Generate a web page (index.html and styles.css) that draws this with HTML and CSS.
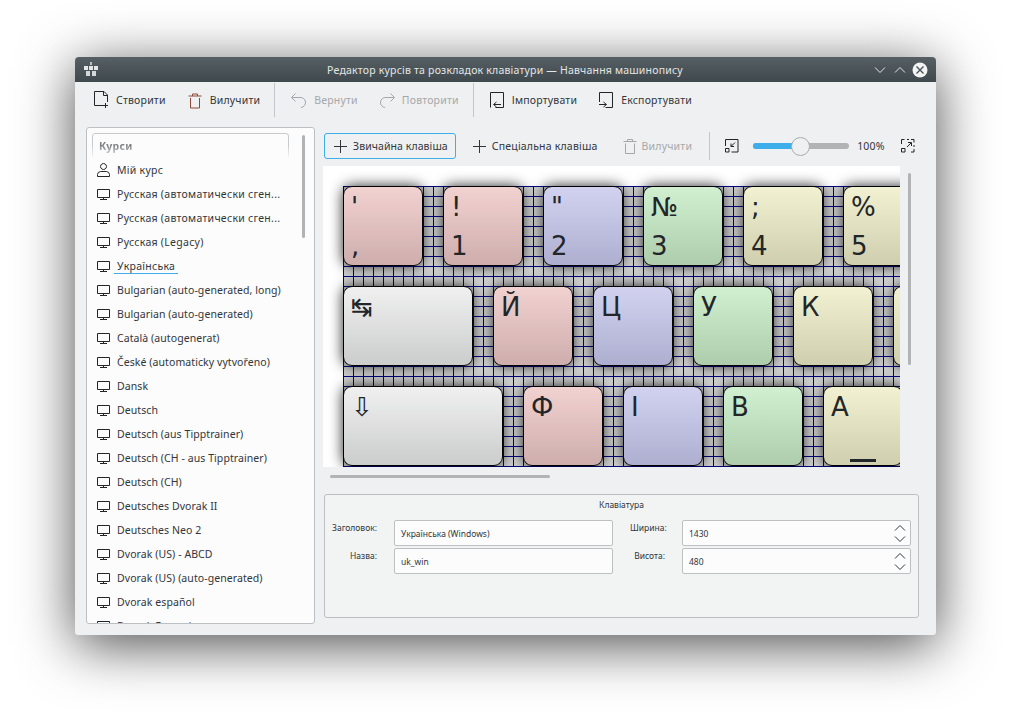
FILE: index.html
```html
<!DOCTYPE html>
<html lang="uk">
<head>
    <meta charset="UTF-8" />
    <title>Редактор курсів та розкладок клавіатури — Навчання машинопису</title>
    <link rel="stylesheet" href="styles.css">
</head>
<body>
    <svg class="sprites" width="0" height="0">
        <symbol id="i-screen" viewBox="0 0 16 16">
            <path d="M2.5 3.5h12v8h-12z M8.5 11.5v2 M5 13.5h7" fill="none" stroke="currentColor" />
        </symbol>
        <symbol id="i-plus" viewBox="0 0 16 16">
            <path d="M8.5 2v13 M2 8.5h13" fill="none" stroke="currentColor" />
        </symbol>
        <symbol id="i-trash" viewBox="0 0 16 16">
            <path d="M1.5 3.500h13 M5.500 3.500v-2h5v2 M3.500 5.500v10h9v-10" fill="none" stroke="currentColor" />
        </symbol>
        <symbol id="i-up" viewBox="0 0 12 8">
            <path d="M1 6.500l5-5 5 5" fill="none" stroke="currentColor" />
        </symbol>
        <symbol id="i-down" viewBox="0 0 12 8">
            <path d="M1 1.500l5 5 5-5" fill="none" stroke="currentColor" />
        </symbol>
    </svg>

    <div class="window">
        <div class="titlebar">
            <svg class="app-icon" width="14" height="16" viewBox="0 0 14 16">
                <path d="M6 0h2v3h-2z" fill="#b9bfc2" />
                <path d="M0 4h4v4h-4z M5 4h4v4h-4z M10 4h4v4h-4z" fill="#e4e7e8" />
                <path d="M2 9h4v5h-4z M8 9h4v5h-4z" fill="#d3d7d9" />
            </svg>
            <span class="title">Редактор курсів та розкладок клавіатури — Навчання машинопису</span>
            <div class="win-buttons">
                <svg class="win-btn" width="12" height="8"><use href="#i-down" /></svg>
                <svg class="win-btn" width="12" height="8"><use href="#i-up" /></svg>
                <svg class="win-close" width="16" height="16" viewBox="0 0 16 16">
                    <circle cx="8" cy="8" r="7.500" fill="#f2f3f3" />
                    <path d="M4.500 4.500l7 7 M11.500 4.500l-7 7" stroke="#4a5357" stroke-width="1.400" />
                </svg>
            </div>
        </div>

        <div class="toolbar">
            <div class="tool">
                <svg width="16" height="18" viewBox="0 0 16 18"><path d="M10.500 14.500h-9v-14h9.500l3.500 3.500v7 M10.500 .5v4h4 M12.500 12v5 M10 14.500h5" fill="none" stroke="#232629" /></svg>
                Створити
            </div>
            <div class="tool">
                <svg class="trash-red" width="16" height="17"><use href="#i-trash" /></svg>
                Вилучити
            </div>
            <div class="sep"></div>
            <div class="tool disabled">
                <svg width="16" height="16" viewBox="0 0 16 16"><path d="M1 5.500h8a5 5 0 0 1 1 10 M4.500 1.500l-4 4 4 4" fill="none" stroke="#a5a8aa" /></svg>
                Вернути
            </div>
            <div class="tool disabled">
                <svg width="16" height="16" viewBox="0 0 16 16"><path d="M15 5.500h-8a5 5 0 0 0 -1 10 M11.500 1.500l4 4-4 4" fill="none" stroke="#a5a8aa" /></svg>
                Повторити
            </div>
            <div class="sep"></div>
            <div class="tool import">
                <svg width="16" height="16" viewBox="0 0 16 16"><path d="M1.500 15.500v-15h13v15h-8 M5 12.500h7 M7.500 10l-3 2.500 3 2.500" fill="none" stroke="#232629" /></svg>
                Імпортувати
            </div>
            <div class="tool">
                <svg width="16" height="16" viewBox="0 0 16 16"><path d="M1.500 10v-9.500h13v15h-7 M1 12.500h7 M5.500 10l3 2.500-3 2.500" fill="none" stroke="#232629" /></svg>
                Експортувати
            </div>
        </div>

        <div class="content">
            <div class="list-panel">
                <div class="list-header">Курси</div>
                <div class="list-scroll"></div>
                <ul class="course-list">
                    <li class="cyr">
                        <svg width="16" height="16" viewBox="0 0 16 16"><path d="M8.500 1.500a3 3 0 1 0 .01 0z M2.500 14.500v-2q0-2.500 3-3h6q3 .5 3 3v2z" fill="none" stroke="#232629" /></svg>
                        Мій курс
                    </li>
                    <li class="cyr"><svg width="16" height="16"><use href="#i-screen" /></svg>Русская (автоматически сген...</li>
                    <li class="cyr"><svg width="16" height="16"><use href="#i-screen" /></svg>Русская (автоматически сген...</li>
                    <li class="cyr"><svg width="16" height="16"><use href="#i-screen" /></svg>Русская (Legacy)</li>
                    <li class="cyr current"><svg width="16" height="16"><use href="#i-screen" /></svg><span>Українська</span></li>
                    <li><svg width="16" height="16"><use href="#i-screen" /></svg>Bulgarian (auto-generated, long)</li>
                    <li><svg width="16" height="16"><use href="#i-screen" /></svg>Bulgarian (auto-generated)</li>
                    <li><svg width="16" height="16"><use href="#i-screen" /></svg>Català (autogenerat)</li>
                    <li><svg width="16" height="16"><use href="#i-screen" /></svg>České (automaticky vytvořeno)</li>
                    <li><svg width="16" height="16"><use href="#i-screen" /></svg>Dansk</li>
                    <li><svg width="16" height="16"><use href="#i-screen" /></svg>Deutsch</li>
                    <li><svg width="16" height="16"><use href="#i-screen" /></svg>Deutsch (aus Tipptrainer)</li>
                    <li><svg width="16" height="16"><use href="#i-screen" /></svg>Deutsch (CH - aus Tipptrainer)</li>
                    <li><svg width="16" height="16"><use href="#i-screen" /></svg>Deutsch (CH)</li>
                    <li><svg width="16" height="16"><use href="#i-screen" /></svg>Deutsches Dvorak II</li>
                    <li><svg width="16" height="16"><use href="#i-screen" /></svg>Deutsches Neo 2</li>
                    <li><svg width="16" height="16"><use href="#i-screen" /></svg>Dvorak (US) - ABCD</li>
                    <li><svg width="16" height="16"><use href="#i-screen" /></svg>Dvorak (US) (auto-generated)</li>
                    <li><svg width="16" height="16"><use href="#i-screen" /></svg>Dvorak español</li>
                    <li><svg width="16" height="16"><use href="#i-screen" /></svg>Dvorak Français</li>
                </ul>
            </div>

            <div class="editor">
                <div class="editor-bar">
                    <button class="bar-btn focused"><svg width="16" height="16"><use href="#i-plus" /></svg>Звичайна клавіша</button>
                    <button class="bar-btn"><svg width="16" height="16"><use href="#i-plus" /></svg>Спеціальна клавіша</button>
                    <button class="bar-btn disabled"><svg width="16" height="16"><use href="#i-trash" /></svg>Вилучити</button>
                    <div class="sep short"></div>
                    <svg class="zoom-icon" width="14" height="14" viewBox="0 0 14 14"><path d="M.5 7v-6.500h12.500v12.500h-6.500 M.5 9.500h3.500v3.500h-3.500z M10 3.500l-4 4 M6 4.500v3h3" fill="none" stroke="#232629" /></svg>
                    <div class="slider"><div class="slider-fill"></div><div class="slider-handle"></div></div>
                    <span class="zoom-value">100%</span>
                    <svg class="zoom-icon" width="14" height="14" viewBox="0 0 14 14"><path d="M.5 5v-4.500h3 M6 .5h2 M10 .5h3v3 M13 6v2 M13 10v3h-3 M.5 9.500h3.500v3.500h-3.500z M6 8l4-4 M7 3.500h3.500v3.500" fill="none" stroke="#232629" /></svg>
                </div>

                <div class="canvas-row">
                    <div class="canvas">
                        <div class="scene">
                            <div class="key-row">
                                <div class="key red"><span>'</span><span>,</span></div>
                                <div class="key red"><span>!</span><span>1</span></div>
                                <div class="key blue"><span>"</span><span>2</span></div>
                                <div class="key green"><span>№</span><span>3</span></div>
                                <div class="key yellow"><span>;</span><span>4</span></div>
                                <div class="key yellow"><span>%</span><span>5</span></div>
                            </div>
                            <div class="key-row">
                                <div class="key grey tab"><span>↹</span></div>
                                <div class="key red"><span>Й</span></div>
                                <div class="key blue"><span>Ц</span></div>
                                <div class="key green"><span>У</span></div>
                                <div class="key yellow"><span>К</span></div>
                                <div class="key yellow"></div>
                            </div>
                            <div class="key-row">
                                <div class="key grey caps"><span>⇩</span></div>
                                <div class="key red"><span>Ф</span></div>
                                <div class="key blue"><span>І</span></div>
                                <div class="key green"><span>В</span></div>
                                <div class="key yellow home"><span>А</span></div>
                            </div>
                        </div>
                    </div>
                    <div class="vscroll"></div>
                </div>
                <div class="hscroll"></div>

                <div class="props">
                    <div class="props-title">Клавіатура</div>
                    <div class="props-grid">
                        <label>Заголовок:</label>
                        <div class="field">Українська (Windows)</div>
                        <label>Ширина:</label>
                        <div class="field spin">1430<span class="arrows"><svg width="12" height="8"><use href="#i-up" /></svg><svg width="12" height="8"><use href="#i-down" /></svg></span></div>
                        <label>Назва:</label>
                        <div class="field">uk_win</div>
                        <label>Висота:</label>
                        <div class="field spin">480<span class="arrows"><svg width="12" height="8"><use href="#i-up" /></svg><svg width="12" height="8"><use href="#i-down" /></svg></span></div>
                    </div>
                </div>
            </div>
        </div>
    </div>
</body>
</html>
```

FILE: styles.css
```css
* {
    margin: 0;
    padding: 0;
    box-sizing: border-box;
}

body {
    background: #fff;
    height: 728px;
    overflow: hidden;
    padding: 57px 75px 0;
    font-family: 'Noto Sans', sans-serif;
    font-size: 10.5px;
    letter-spacing: 0.2px;
    color: #31363b;
}

.sprites {
    position: absolute;
}

svg {
    flex: none;
    display: block;
}

.window {
    width: 861px;
    height: 578px;
    background: #eff0f1;
    border-radius: 4px 4px 3px 3px;
    overflow: hidden;
    box-shadow: 0 10px 55px rgba(0, 0, 0, 0.7);
}

.titlebar {
    height: 25px;
    background: linear-gradient(#566064, #3f484c);
    display: flex;
    align-items: center;
    padding: 0 8px 0 9px;
}

.title {
    flex: 1;
    text-align: center;
    color: #e4e6e7;
    padding-left: 38px;
}

.win-buttons {
    display: flex;
    align-items: center;
    gap: 7px;
}

.win-btn {
    color: #e4e6e7;
    margin-right: 1px;
}

.win-close {
    margin-left: -2px;
}

.toolbar {
    height: 37px;
    display: flex;
    align-items: center;
    padding: 0 0 1px 18px;
}

.tool {
    display: flex;
    align-items: center;
    gap: 7px;
    margin-right: 21px;
    white-space: nowrap;
}

.tool.disabled {
    color: #a5a8aa;
}

.tool.import {
    margin-left: -1px;
}

.trash-red {
    color: #8a4a36;
}

.sep {
    width: 1px;
    height: 34px;
    background: #c3c6c8;
    margin: 0 16px 0 -7px;
}

.sep.short {
    height: 28px;
    margin: 0 15px 0 9px;
}

.content {
    display: flex;
    padding: 8px 17px 0 11px;
    gap: 9px;
}

.list-panel {
    width: 229px;
    height: 497px;
    background: #fcfcfc;
    border: 1px solid #bcc0c2;
    border-radius: 3px;
    overflow: hidden;
    position: relative;
}

.list-header {
    margin: 5px 0 0 5px;
    width: 197px;
    height: 25px;
    border: 1px solid #c8cbcd;
    border-bottom: none;
    border-radius: 3px 3px 0 0;
    font-weight: bold;
    color: #7f8285;
    padding: 5px 0 0 6px;
    -webkit-mask-image: linear-gradient(#000 50%, rgba(0, 0, 0, 0.1));
}

.list-scroll {
    position: absolute;
    left: 215px;
    top: 7px;
    width: 3px;
    height: 103px;
    background: #b1b3b5;
    border-radius: 2px;
}

.course-list {
    list-style: none;
}

.course-list li {
    height: 24px;
    display: flex;
    align-items: center;
    gap: 6px;
    padding-left: 8px;
    white-space: nowrap;
    letter-spacing: 0.08px;
}

.course-list li.cyr {
    letter-spacing: 0.28px;
}

.course-list li svg {
    color: #232629;
}

.course-list .current span {
    border-bottom: 1px solid #3daee9;
    padding: 0 3px;
    margin: 1px 0 0 -3px;
}

.editor {
    width: 595px;
}

.editor-bar {
    height: 38px;
    display: flex;
    align-items: center;
}

.bar-btn {
    height: 26px;
    border: 1px solid transparent;
    background: none;
    font: inherit;
    letter-spacing: inherit;
    color: inherit;
    display: flex;
    align-items: center;
    gap: 5px;
    padding: 0 7px;
    border-radius: 3px;
    margin-right: 8px;
    white-space: nowrap;
}

.bar-btn.focused {
    border-color: #3daee9;
    margin-right: 7px;
    letter-spacing: 0.08px;
}

.bar-btn.disabled {
    color: #a5a8aa;
    margin-right: 0;
    gap: 4px;
}

.slider {
    width: 96px;
    height: 6px;
    border-radius: 3px;
    background: #b1b3b5;
    margin: 0 8px 0 14px;
    position: relative;
}

.slider-fill {
    width: 40px;
    height: 6px;
    border-radius: 3px 0 0 3px;
    background: #3daee9;
}

.slider-handle {
    position: absolute;
    left: 38px;
    top: -6px;
    width: 19px;
    height: 19px;
    border-radius: 50%;
    background: #eff0f1;
    border: 1px solid #a9acae;
}

.zoom-value {
    margin-right: 16px;
}

.canvas-row {
    display: flex;
    margin-top: 1px;
    margin-left: -1px;
}

.canvas {
    width: 577px;
    height: 301px;
    background: #fff;
    overflow: hidden;
    padding: 20px 0 0 20px;
}

.scene {
    width: 1430px;
    height: 480px;
    background-color: #d0d0d0;
    background-image:
        linear-gradient(#000080 1px, transparent 1px),
        linear-gradient(90deg, #000080 1px, transparent 1px);
    background-size: 10px 10px;
}

.key-row {
    display: flex;
    gap: 20px;
    margin-bottom: 20px;
}

.key {
    width: 80px;
    height: 80px;
    flex: none;
    border: 1px solid #000;
    border-width: 1px 1.5px 1.5px 1px;
    border-radius: 9px;
    padding: 2px 7px;
    display: flex;
    flex-direction: column;
    gap: 2px;
    font-family: 'DejaVu Sans', sans-serif;
    font-size: 26px;
    line-height: 37px;
    letter-spacing: 0;
    color: #232629;
    box-shadow: 0 0 14px rgba(0, 0, 0, 0.85);
    position: relative;
}

.key.red { background: linear-gradient(#f2d2d0, #ceadad); }
.key.blue { background: linear-gradient(#d2d2f0, #aeaed0); }
.key.green { background: linear-gradient(#d0f0d0, #adcdad); }
.key.yellow { background: linear-gradient(#f2f2d2, #cfcfaf); }
.key.grey { background: linear-gradient(#f0f0f0, #cbcdcc); }
.key.tab { width: 130px; }
.key.caps { width: 160px; }

.key.home::after {
    content: "";
    position: absolute;
    left: 26px;
    right: 26px;
    bottom: 3px;
    height: 3px;
    background: #232629;
}

.vscroll {
    width: 3px;
    height: 192px;
    margin: 7px 0 0 8px;
    background: #b1b3b5;
    border-radius: 2px;
}

.hscroll {
    width: 220px;
    height: 3px;
    margin: 8px 0 0 6px;
    background: #b1b3b5;
    border-radius: 2px;
}

.props {
    margin-top: 16px;
    height: 124px;
    border: 1px solid #bcc0c2;
    border-radius: 3px;
    background: #f2f4f4;
    font-size: 8.5px;
    letter-spacing: 0;
}

.props-title {
    text-align: center;
    padding-top: 4px;
    line-height: 12px;
}

.props-grid {
    display: grid;
    grid-template-columns: 52px 219px 35px 229px;
    grid-auto-rows: 26px;
    column-gap: 17px;
    row-gap: 2px;
    margin-top: 9px;
}

.props-grid label {
    text-align: right;
    white-space: nowrap;
    padding-top: 1px;
    line-height: 14px;
}

.field {
    background: #fcfcfc;
    border: 1px solid #bcc0c2;
    border-radius: 2px;
    padding-left: 6px;
    display: flex;
    align-items: center;
    justify-content: space-between;
}

.arrows {
    display: flex;
    flex-direction: column;
    gap: 3px;
    margin-right: 4px;
    color: #31363b;
}
```
